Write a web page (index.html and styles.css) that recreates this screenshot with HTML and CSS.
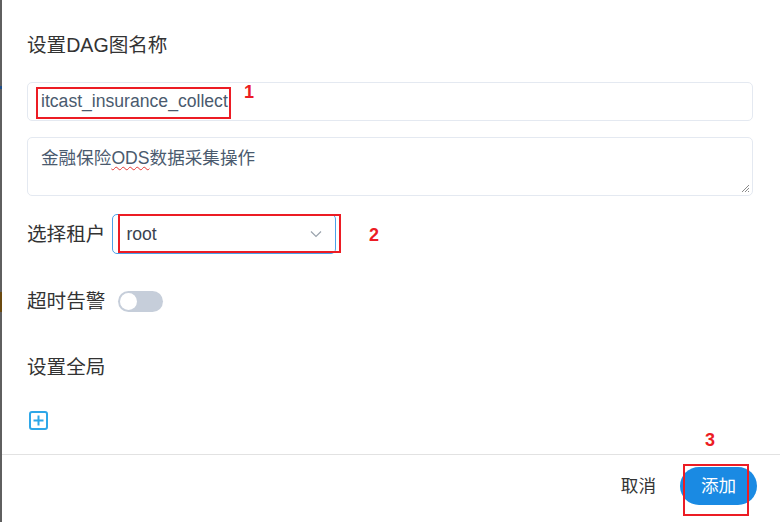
FILE: index.html
```html
<!DOCTYPE html>
<html lang="zh-CN">
<head>
<meta charset="utf-8">
<title>设置DAG图名称</title>
<link rel="stylesheet" href="styles.css">
</head>
<body>
<div class="page">
  <div class="strip"></div>
  <div class="dialog">
    <div class="body">
      <div class="title">设置DAG图名称</div>
      <div class="input">itcast_insurance_collect</div>
      <div class="textarea">金融保险<span class="typo">ODS</span>数据采集操作
        <svg class="grip" width="10" height="10" viewBox="0 0 10 10"><path d="M9 2 L2 9 M9 5 L5 9 M9 8 L8 9" stroke="#8a8a8a" stroke-width="1" fill="none"/></svg>
      </div>
      <div class="row tenant-row">
        <span class="label">选择租户</span>
        <div class="select">
          <span>root</span>
          <svg class="chev" width="12" height="8" viewBox="0 0 12 8"><path d="M1 1.5 L6 6.5 L11 1.5" stroke="#9aa3ad" stroke-width="1.2" fill="none"/></svg>
        </div>
      </div>
      <div class="row alarm-row">
        <span class="label">超时告警</span>
        <span class="switch"><span class="knob"></span></span>
      </div>
      <div class="row global-row"><span class="label">设置全局</span></div>
      <svg class="plus" width="19" height="19" viewBox="0 0 19 19"><rect x="1" y="1" width="17" height="17" rx="2" fill="none" stroke="#2ea7e8" stroke-width="2"/><path d="M4.5 9.5 H14.5 M9.5 4.5 V14.5" stroke="#2ea7e8" stroke-width="2"/></svg>
    </div>
    <div class="footer">
      <span class="cancel">取消</span>
      <span class="ok">添加</span>
    </div>
    <div class="mark box1"></div>
    <div class="num n1">1</div>
    <div class="mark box2"></div>
    <div class="num n2">2</div>
    <div class="mark box3"></div>
    <div class="num n3">3</div>
  </div>
</div>
</body>
</html>
```
FILE: styles.css
```css
html, body {
  margin: 0;
  padding: 0;
  background: #fff;
}
body {
  width: 780px;
  height: 522px;
  overflow: hidden;
  font-family: "Liberation Sans", "Noto Sans CJK SC", sans-serif;
  font-size: 17.6px;
  color: #333;
}
.page {
  display: flex;
  height: 522px;
}
.strip {
  width: 2px;
  flex: none;
  background: linear-gradient(to bottom, #5f5f5f 0, #5f5f5f 86px, #1f4f8a 86px, #1f4f8a 89px, #5f5f5f 89px, #5f5f5f 292px, #6b4a10 292px, #6b4a10 312px, #5f5f5f 312px);
}
.dialog {
  flex: 1;
  position: relative;
  display: flex;
  flex-direction: column;
}
.body {
  padding: 33px 27px 0 25px;
  display: flex;
  flex-direction: column;
  align-items: flex-start;
}
.title {
  height: 24px;
  line-height: 24px;
  font-size: 19.6px;
}
.input {
  margin-top: 25px;
  align-self: stretch;
  box-sizing: border-box;
  height: 39px;
  line-height: 37px;
  border: 1px solid #e4e9f1;
  border-radius: 5px;
  padding-left: 13px;
  color: #4a5a6e;
}
.textarea {
  margin-top: 16px;
  align-self: stretch;
  position: relative;
  box-sizing: border-box;
  height: 59px;
  border: 1px solid #e4e9f1;
  border-radius: 5px;
  padding: 8px 13px 0;
  line-height: 24px;
  color: #4a5a6e;
}
.typo {
  text-decoration: underline wavy #e53935;
  text-decoration-thickness: 1px;
  text-underline-offset: 2px;
}
.grip {
  position: absolute;
  right: 2px;
  bottom: 2px;
}
.row {
  display: flex;
  align-items: center;
}
.label {
  line-height: 24px;
  font-size: 19.6px;
}
.tenant-row {
  margin-top: 18px;
  height: 40px;
}
.select {
  margin-left: 7px;
  box-sizing: border-box;
  width: 224px;
  height: 40px;
  border: 1px solid #4ba1e8;
  border-radius: 5px;
  display: flex;
  align-items: center;
  justify-content: space-between;
  padding: 0 13px 0 13px;
  color: #3a4250;
}
.alarm-row {
  margin-top: 35px;
  height: 24px;
}
.switch {
  margin-left: 13px;
  width: 45px;
  height: 21px;
  border-radius: 11px;
  background: #c6ceda;
  position: relative;
  display: inline-block;
}
.knob {
  position: absolute;
  left: 2px;
  top: 2px;
  width: 17px;
  height: 17px;
  border-radius: 50%;
  background: #fff;
}
.global-row {
  margin-top: 42px;
  height: 24px;
}
.plus {
  margin-top: 32px;
  margin-left: 2px;
}
.footer {
  margin-top: 24px;
  border-top: 1px solid #e2e2e2;
  display: flex;
  align-items: center;
  justify-content: flex-end;
  padding: 12px 23px 0 0;
}
.cancel {
  color: #333;
  line-height: 38px;
  margin-right: 24px;
}
.ok {
  width: 77px;
  height: 38px;
  line-height: 38px;
  text-align: center;
  border-radius: 19px;
  background: #1a8ae3;
  color: #fff;
}
.mark {
  position: absolute;
  border: 2px solid #ec1c24;
  box-sizing: border-box;
}
.box1 { left: 34px; top: 87px; width: 195px; height: 32px; }
.box2 { left: 116px; top: 214px; width: 223px; height: 39px; }
.box3 { left: 681px; top: 464px; width: 66px; height: 52px; }
.num {
  position: absolute;
  color: #ec1c24;
  font-weight: bold;
  font-family: "Liberation Sans", sans-serif;
  font-size: 18px;
  line-height: 18px;
}
.n1 { left: 242px; top: 83px; }
.n2 { left: 367px; top: 226px; }
.n3 { left: 703px; top: 431px; }
```
